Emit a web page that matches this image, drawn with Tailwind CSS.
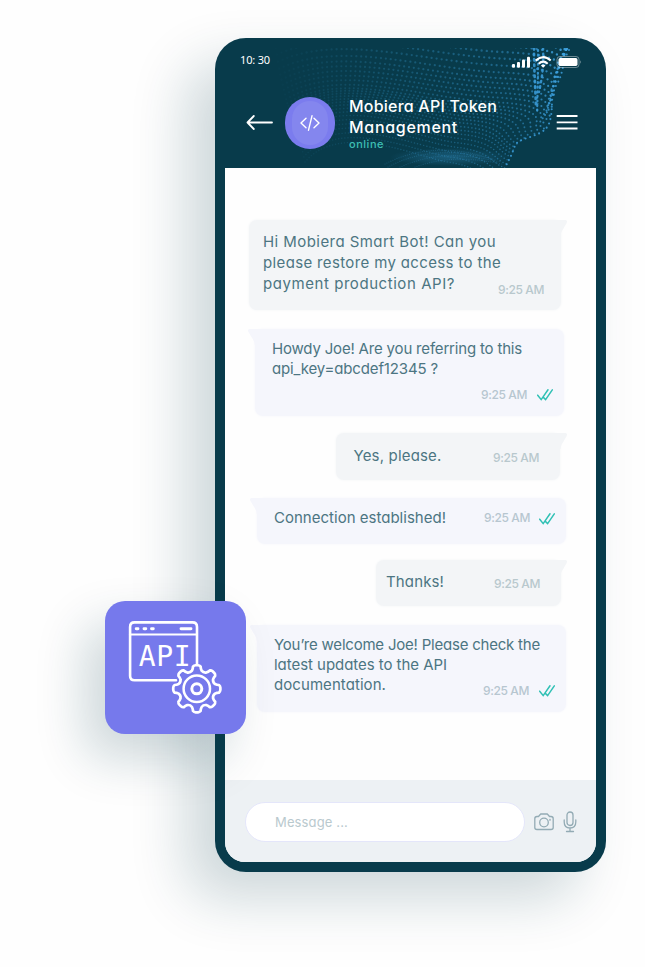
<!DOCTYPE html>
<html lang="en">
<head>
<meta charset="utf-8">
<title>Mobiera API Token Management</title>
<script src="https://cdn.jsdelivr.net/npm/@tailwindcss/browser@4"></script>
</head>
<body class="bg-white">
<main class="relative w-[645px] h-[967px] overflow-hidden bg-[#fefefe] pt-[38px] pl-[215px] font-['Inter','Liberation_Sans',sans-serif] [font-feature-settings:'cv11']">

  <svg class="hidden">
    <defs>
      <symbol id="checks" viewBox="0 0 16 12"><path d="M.7 6.2 4.2 10.6 11 .8M6.6 8.6 8.6 10.6 15.3.8" fill="none" stroke="#2fc0b4" stroke-width="1.5" stroke-linecap="round"/></symbol>
      <symbol id="tail-right" viewBox="0 0 16 16"><path d="M0 0H14.5Q17 .5 15.4 3.5L11 11Q9.6 13 9.5 16H0Z" fill="#f3f5f7"/></symbol>
      <symbol id="tail-left" viewBox="0 0 16 16"><path d="M16 0H1.5Q-1 .5 .6 3.3L5 10.5Q6.6 13 6.8 16H16Z" fill="#f5f6fc"/></symbol>
    </defs>
  </svg>

  <section class="flex flex-col w-[391.4px] h-[834px] rounded-[31px] bg-[#083b4b] px-[10px] pb-[10px] shadow-[-28px_26px_56px_0px_rgba(8,59,75,0.2)]">
    <header class="relative flex flex-col h-[130px] shrink-0">
      <svg class="absolute left-0 top-[10px] w-[371px] h-[120px]" viewBox="225 48 371 120" fill="none" stroke-linecap="round">
        <defs>
          <linearGradient id="fade" gradientUnits="userSpaceOnUse" x1="270" y1="0" x2="565" y2="0">
            <stop offset="0" stop-color="#2f8fc0" stop-opacity="0"/>
            <stop offset=".4" stop-color="#2f8fc0" stop-opacity=".3"/>
            <stop offset=".85" stop-color="#3290c8" stop-opacity=".55"/>
            <stop offset="1" stop-color="#3fa5e4" stop-opacity=".9"/>
          </linearGradient>
          <radialGradient id="glow"><stop offset="0" stop-color="#2f86b5" stop-opacity=".45"/><stop offset="1" stop-color="#2f86b5" stop-opacity="0"/></radialGradient>
        </defs>
        <g id="waves" stroke="url(#fade)"></g>
        <ellipse cx="450" cy="157" rx="60" ry="9" fill="url(#glow)"/>
        <g stroke="#3e9ad0" stroke-width="1.1" stroke-dasharray="0 2.2" opacity=".3">
          <path d="M385 164C410 151 445 143 492 159"/><path d="M388 167C412 154 447 146 496 160"/><path d="M400 167C424 157 450 150 500 162"/><path d="M415 167C435 160 460 155 502 164"/>
        </g>
        <g stroke="#3c9fdd" stroke-linecap="round" opacity=".85">
          <path d="M569 50C562 62 564 72 557 84S553 104 551 116S545 132 530 137S516 143 513 151S508 161 505 168" stroke-width="2.1" stroke-dasharray="0 4.8"/>
          <path d="M534 48C534 68 535 80 536 108" stroke-width="2.6" stroke-dasharray="1.5 4"/>
          <path d="M538 50C538 68 538 82 537 114" stroke-width="2.2" stroke-dasharray="1 3.6"/>
          <path d="M543 48C544 66 542 78 539 92" stroke-width="2.4" stroke-dasharray="1.5 4"/>
        </g>
      </svg>

      <div class="relative flex h-[44px] items-center pt-[3px] pl-[15px] pr-[14px] text-white">
        <span data-w="30" class="mt-[-3px] text-[11px] leading-[14px] whitespace-nowrap font-['Noto_Sans',sans-serif]">10: 30</span>
        <svg class="ml-auto mt-[1px] w-[70px] h-[14px]" viewBox="0 0 70 14" fill="#fff">
          <rect x="0" y="9" width="3" height="3.7" rx="1"/><rect x="5" y="7" width="3" height="5.7" rx="1"/><rect x="10" y="4.5" width="3" height="8.2" rx="1"/><rect x="15" y="1.7" width="3" height="11" rx="1"/>
          <g fill="none" stroke="#fff" stroke-width="2.1"><path d="M23.7 5.6Q31.3-1.2 38.7 5.6"/><path d="M26.7 8.7Q31.3 4.7 35.7 8.7"/></g>
          <path d="M31.2 12.7 28.9 10.5Q31.2 8.5 33.5 10.5Z"/>
          <rect x="45" y="1.5" width="22" height="11" rx="3" fill="none" stroke="#fff" stroke-opacity=".4"/><rect x="46.5" y="3" width="19" height="8" rx="1.7"/><path d="M68.3 5.2Q70 7 68.3 8.8Z" opacity=".5"/>
        </svg>
      </div>

      <div class="relative flex items-start pl-[21px] pr-[18.5px] pt-[14px]">
        <svg class="mt-[18px] w-[28px] h-[17px]" viewBox="0 0 28 17" fill="none" stroke="#fff" stroke-width="1.8" stroke-linecap="round" stroke-linejoin="round"><path d="M26 8.5H1.5M7.8 2 1.5 8.5 7.8 15"/></svg>
        <div class="ml-[11px] mt-px flex h-[52px] w-[50px] items-center justify-center rounded-full bg-[#7b7cee]">
          <div class="flex h-[44px] w-[36px] items-center justify-center rounded-full bg-[#8486ee]">
            <svg class="w-[20px] h-[16px]" viewBox="0 0 20 16" fill="none" stroke="#fff" stroke-width="1.4" stroke-linecap="round" stroke-linejoin="round"><path d="M6 3.3 1 8 6 12.7M14 3.3 19 8 14 12.7M12 .8 8.5 15.2"/></svg>
          </div>
        </div>
        <div class="ml-[14px] whitespace-nowrap text-[16px] font-medium leading-[21px] text-white">
          <div><span data-w="148">Mobiera API Token</span></div>
          <div><span data-w="109">Management</span></div>
          <div class="text-[11px] leading-[13px] text-[#3dbfb3]"><span data-w="35">online</span></div>
        </div>
        <svg class="ml-auto mt-[18px] w-[22px] h-[16px]" viewBox="0 0 22 16" stroke="#fff" stroke-width="1.8"><path d="M.7 2H21.5M.7 8.3H21.5M.7 14.5H21.5"/></svg>
      </div>
    </header>

    <div class="flex grow flex-col overflow-hidden rounded-b-[20px] bg-[#fefefe]">
      <div class="flex h-[612px] shrink-0 flex-col pt-[52px] text-[15px] leading-[20px] text-[#4c7582]">

        <article class="relative ml-[24px] flex h-[90px] w-[312px] rounded-[8px] bg-[#f3f5f7] pl-[14px] pr-[17px] pt-[11px] shadow-[0_0_3px_#f3f5f7]">
          <svg class="absolute right-[-6px] top-0 size-[16px]"><use href="#tail-right"/></svg>
          <div class="w-0 grow whitespace-nowrap leading-[21px]"><div><span data-w="233">Hi Mobiera Smart Bot! Can you</span></div><div><span data-w="238">please restore my access to the</span></div><div><span data-w="192">payment production API?</span></div></div>
          <time data-w="46" class="mt-[51px] self-start whitespace-nowrap text-[12px] font-medium leading-[16px] text-[#b8c8cd]">9:25 AM</time>
        </article>

        <article class="relative ml-[30px] mt-[19px] flex h-[87px] w-[309px] rounded-[8px] bg-[#f5f6fc] pl-[17px] pr-[11px] pt-[10px] shadow-[0_0_3px_#f5f6fc]">
          <svg class="absolute left-[-7px] top-0 size-[16px]"><use href="#tail-left"/></svg>
          <div class="w-0 grow whitespace-nowrap"><div><span data-w="250">Howdy Joe! Are you referring to this</span></div><div><span data-w="166">api_key=abcdef12345 ?</span></div></div>
          <time data-w="46" class="mt-[48px] self-start whitespace-nowrap text-[12px] font-medium leading-[16px] text-[#b7c6d0]">9:25 AM</time>
          <svg class="ml-[10px] mt-[50px] h-[12px] w-[16px]"><use href="#checks"/></svg>
        </article>

        <article class="relative ml-[111px] mt-[17px] flex h-[47px] w-[224px] rounded-[8px] bg-[#f3f5f7] pl-[17.5px] pr-[21px] pt-[13px] shadow-[0_0_3px_#f3f5f7]">
          <svg class="absolute right-[-7px] top-0 size-[16px]"><use href="#tail-right"/></svg>
          <div class="w-0 grow whitespace-nowrap"><span data-w="88">Yes, please.</span></div>
          <time data-w="46" class="mt-[4px] self-start whitespace-nowrap text-[12px] font-medium leading-[16px] text-[#b8c8cd]">9:25 AM</time>
        </article>

        <article class="relative ml-[32px] mt-[18px] flex h-[46px] w-[309px] rounded-[8px] bg-[#f5f6fc] pl-[17px] pr-[11px] pt-[10px] shadow-[0_0_3px_#f5f6fc]">
          <svg class="absolute left-[-7px] top-0 size-[16px]"><use href="#tail-left"/></svg>
          <div class="w-0 grow whitespace-nowrap"><span data-w="172">Connection established!</span></div>
          <time data-w="46" class="mt-[2px] self-start whitespace-nowrap text-[12px] font-medium leading-[16px] text-[#b7c6d0]">9:25 AM</time>
          <svg class="ml-[9px] mt-[5px] h-[12px] w-[16px]"><use href="#checks"/></svg>
        </article>

        <article class="relative ml-[151px] mt-[16px] flex h-[46px] w-[185px] rounded-[8px] bg-[#f3f5f7] pl-[10px] pr-[21px] pt-[12px] shadow-[0_0_3px_#f3f5f7]">
          <svg class="absolute right-[-6px] top-0 size-[16px]"><use href="#tail-right"/></svg>
          <div class="w-0 grow whitespace-nowrap"><span data-w="58">Thanks!</span></div>
          <time data-w="46" class="mt-[4px] self-start whitespace-nowrap text-[12px] font-medium leading-[16px] text-[#b8c8cd]">9:25 AM</time>
        </article>

        <article class="relative ml-[32px] mt-[19px] flex h-[87px] w-[309px] rounded-[8px] bg-[#f5f6fc] pl-[17px] pr-[11px] pt-[10px] shadow-[0_0_3px_#f5f6fc]">
          <svg class="absolute left-[-7px] top-0 size-[16px]"><use href="#tail-left"/></svg>
          <div class="w-0 grow whitespace-nowrap"><div><span data-w="266">You’re welcome Joe! Please check the</span></div><div><span data-w="173">latest updates to the API</span></div><div><span data-w="112">documentation.</span></div></div>
          <time data-w="46" class="mt-[48px] self-start whitespace-nowrap text-[12px] font-medium leading-[16px] text-[#b7c6d0]">9:25 AM</time>
          <svg class="ml-[10px] mt-[50px] h-[12px] w-[16px]"><use href="#checks"/></svg>
        </article>
      </div>

      <footer class="flex grow items-center bg-[#edf1f4] pl-[20px] pr-[19px] pt-[2px]">
        <div class="flex h-[40px] w-[280px] items-center rounded-full border border-[#e4e6fa] bg-white pl-[29px] pt-px text-[13px] text-[#b9c9ce]"><span data-w="73" class="whitespace-nowrap">Message ...</span></div>
        <svg class="ml-[9px] h-[18px] w-[20px]" viewBox="0 0 20 18" fill="none" stroke="#93abb4" stroke-width="1.3" stroke-linejoin="round"><path d="M3 3.5H4.5L6.7 1H13.3L15.5 3.5H17Q19.2 3.5 19.2 5.7V14.5Q19.2 16.5 17 16.5H3Q.8 16.5 .8 14.5V5.7Q.8 3.5 3 3.5Z"/><circle cx="10" cy="9.5" r="4.3"/><circle cx="16" cy="6.7" r=".3"/></svg>
        <svg class="ml-auto h-[22px] w-[14px]" viewBox="0 0 14 22" fill="none" stroke="#93abb4" stroke-width="1.3" stroke-linecap="round"><rect x="4" y="1" width="6" height="13.5" rx="3"/><path d="M1.2 9V11Q1.2 17 7 17T12.8 11V9M7 17V20.5M3.5 20.5H10.5"/></svg>
      </footer>
    </div>
  </section>

  <aside class="absolute left-[105px] top-[601px] flex h-[133px] w-[141px] items-start rounded-[20px] bg-[#7679ec] pl-[23px] pt-[19px] shadow-[-20px_24px_50px_0px_rgba(8,59,75,0.2)]">
    <svg class="h-[96px] w-[96px]" viewBox="128 620 96 96" fill="none" stroke="#fff" stroke-width="2.6" stroke-linecap="round" stroke-linejoin="round">
      <path d="M176 680.3H134.5Q130.1 680.3 130.1 676V627Q130.1 622.4 134.5 622.4H192.5Q197 622.4 197 627V665"/>
      <path d="M130 634.5H197" stroke-width="2.2"/>
      <path d="M136.2 628.7H138M144 628.7H145.8M151.5 628.7H153.3M181 628.7H191" stroke-width="2.9"/>
      <text x="138.800" y="665.5" fill="#fff" stroke="none" letter-spacing=".6" font-family="DejaVu Sans Mono" font-size="28">API</text>
      <path id="gear" fill="#7679ec" stroke-width="2.7"/>
      <circle cx="196.8" cy="688.8" r="13.2" stroke-width="2.5"/>
      <circle cx="196.8" cy="688.8" r="5" stroke-width="3"/>
    </svg>
  </aside>
</main>
<script>
  // Track each line out to its measured width, again whenever styles change its size.
  const lines = [...document.querySelectorAll('[data-w]')];
  function fitLines() {
    lines.forEach(el => {
      el.style.letterSpacing = '0px';
      const range = document.createRange();
      range.selectNodeContents(el);
      const gap = (el.dataset.w - range.getBoundingClientRect().width) / el.textContent.length;
      el.style.letterSpacing = gap.toFixed(3) + 'px';
    });
  }
  fitLines();
  window.addEventListener('load', () => { fitLines(); requestAnimationFrame(fitLines); });
  document.fonts.ready.then(fitLines);
  new ResizeObserver(fitLines).observe(document.querySelector('main'));

  // Dotted wave surface in the header: every row ends on the bright right-hand rim.
  const rim = [[572,30],[568,50],[562,68],[557,84],[553,104],[550,118],[543,131],[528,138],[515,146],[511,156],[506,168],[498,182]];
  const ns = 'http://www.w3.org/2000/svg', waves = document.getElementById('waves');
  const rows = 34;
  for (let k = 0; k <= rows; k++) {
    const t = k / rows * (rim.length - 1), i = Math.min(Math.floor(t), rim.length - 2), f = t - i;
    const x = rim[i][0] + (rim[i+1][0] - rim[i][0]) * f, y = rim[i][1] + (rim[i+1][1] - rim[i][1]) * f, d = k / rows;
    const p = document.createElementNS(ns, 'path');
    p.setAttribute('d', `M${265 + d*40} ${y - 40 + d*20}C340 ${y - 62} 420 ${y - 38 + d*14} ${x - 50} ${y - 34 + d*14}S${x - 16} ${y - 6} ${x} ${y}`);
    p.setAttribute('stroke-width', (2.7 - d * 1.3).toFixed(2));
    p.setAttribute('stroke-dasharray', `0 ${(6 - d * 3).toFixed(2)}`);
    waves.appendChild(p);
  }

  // Eight-tooth gear outline.
  let g = '';
  for (let k = 0; k < 8; k++) {
    const a = k * Math.PI / 4 - Math.PI / 2;
    const pt = (r, o) => `${(196.8 + r * Math.cos(a + o)).toFixed(2)} ${(688.8 + r * Math.sin(a + o)).toFixed(2)}`;
    g += `${k ? 'L' : 'M'}${pt(18.8, -.26)}Q${pt(20.5, -.19)} ${pt(22.5, -.17)}Q${pt(23.6, -.12)} ${pt(23.6, -.05)}L${pt(23.6, .05)}Q${pt(23.6, .12)} ${pt(22.5, .17)}Q${pt(20.5, .19)} ${pt(18.8, .26)}Q${pt(17.2, .3927)} ${pt(18.8, .525)}`;
  }
  document.getElementById('gear').setAttribute('d', g + 'Z');
</script>
</body>
</html>
